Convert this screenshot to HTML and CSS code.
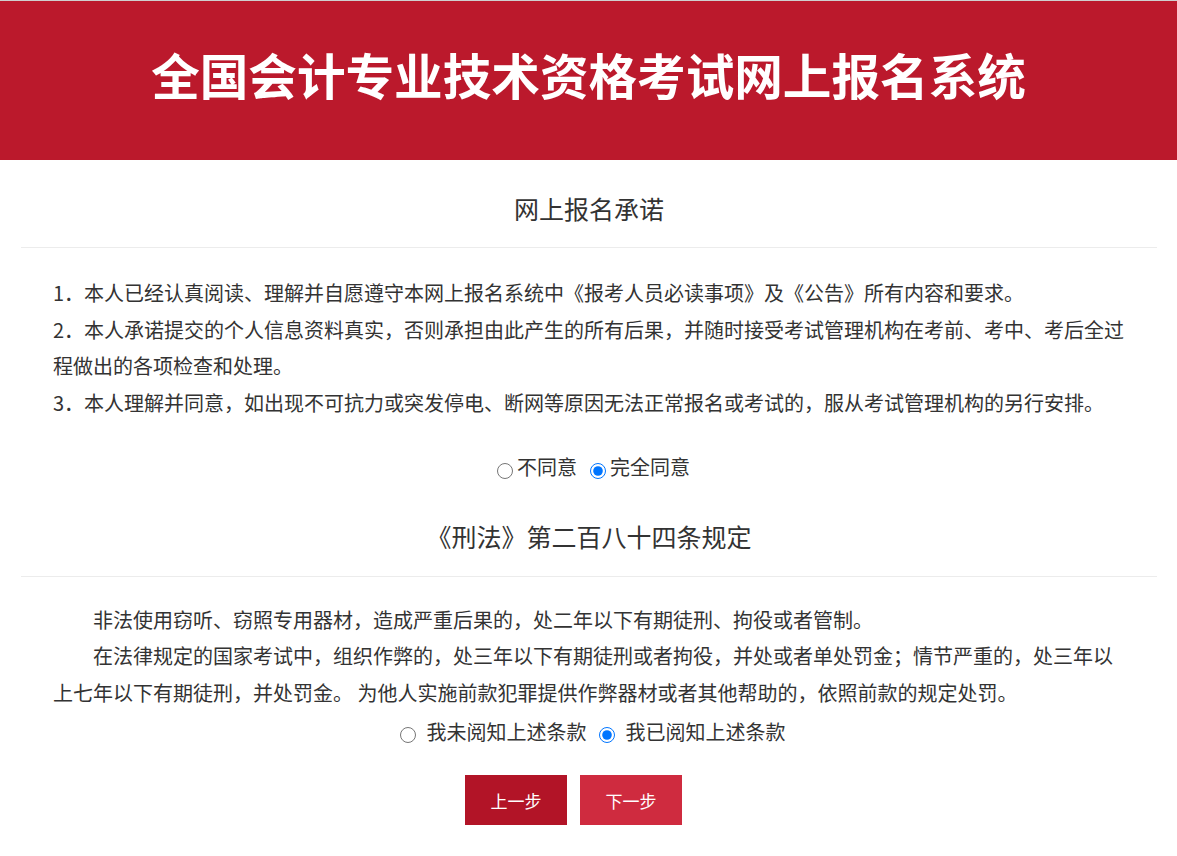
FILE: index.html
```html
<!DOCTYPE html>
<html lang="zh-CN">
<head>
<meta charset="utf-8">
<title>全国会计专业技术资格考试网上报名系统</title>
<link rel="stylesheet" href="styles.css">
</head>
<body>
<header class="banner">
  <h1 class="banner-title">全国会计专业技术资格考试网上报名系统</h1>
</header>
<main class="page">
  <h2 class="section-title">网上报名承诺</h2>
  <div class="terms">
    <p>1．本人已经认真阅读、理解并自愿遵守本网上报名系统中《报考人员必读事项》及《公告》所有内容和要求。</p>
    <p>2．本人承诺提交的个人信息资料真实，否则承担由此产生的所有后果，并随时接受考试管理机构在考前、考中、考后全过程做出的各项检查和处理。</p>
    <p>3．本人理解并同意，如出现不可抗力或突发停电、断网等原因无法正常报名或考试的，服从考试管理机构的另行安排。</p>
  </div>
  <div class="choice choice-agree">
    <label class="opt"><input type="radio" name="agree" class="radio">不同意</label>
    <label class="opt"><input type="radio" name="agree" class="radio" checked>完全同意</label>
  </div>
  <h2 class="section-title section-title-2">《刑法》第二百八十四条规定</h2>
  <div class="law">
    <p class="indent">非法使用窃听、窃照专用器材，造成严重后果的，处二年以下有期徒刑、拘役或者管制。</p>
    <p class="indent">在法律规定的国家考试中，组织作弊的，处三年以下有期徒刑或者拘役，并处或者单处罚金；情节严重的，处三年以上七年以下有期徒刑，并处罚金。 为他人实施前款犯罪提供作弊器材或者其他帮助的，依照前款的规定处罚。</p>
  </div>
  <div class="choice choice-read">
    <label class="opt"><input type="radio" name="read" class="radio">我未阅知上述条款</label>
    <label class="opt"><input type="radio" name="read" class="radio" checked>我已阅知上述条款</label>
  </div>
  <div class="actions">
    <button type="button" class="btn btn-prev">上一步</button>
    <button type="button" class="btn btn-next">下一步</button>
  </div>
</main>
</body>
</html>
```
FILE: styles.css
```css
html, body {
  margin: 0;
  padding: 0;
  background: #fff;
}
body {
  font-family: "Noto Sans CJK SC", "Microsoft YaHei", "Noto Sans", sans-serif;
  color: #333;
  width: 1177px;
}
.banner {
  border-top: 1px solid #cfcfcf;
  background: #bb192c;
  height: 159px;
  display: flex;
  align-items: center;
  justify-content: center;
}
.banner-title {
  margin: 0;
  color: #fff;
  font-size: 48.6px;
  font-weight: 700;
  line-height: 1;
  padding-bottom: 12px;
}
.page {
  padding: 0;
}
.section-title {
  margin: 29px 20px 0 21px;
  padding-bottom: 20px;
  border-bottom: 1px solid #ececec;
  text-align: center;
  font-size: 25px;
  font-weight: 400;
  line-height: 38px;
  color: #333;
}
.section-title-2 {
  margin-top: 31px;
  padding-bottom: 21px;
}
.terms, .law {
  padding: 0 49px 0 53px;
  font-size: 20px;
  line-height: 36.7px;
}
.terms {
  margin-top: 27px;
}
.law {
  margin-top: 25px;
}
.terms p, .law p {
  margin: 0;
}
.indent {
  text-indent: 2em;
}
.choice {
  display: flex;
  justify-content: center;
  align-items: center;
  font-size: 20px;
  line-height: 36.7px;
}
.choice-agree {
  margin-top: 27px;
  padding-left: 10px;
  gap: 13px;
}
.choice-agree .opt {
  gap: 4px;
}
.choice-read {
  margin-top: 2px;
  padding-left: 8px;
  gap: 12px;
}
.choice-read .opt {
  gap: 11px;
}
.opt {
  display: flex;
  align-items: center;
  cursor: pointer;
}
.radio {
  width: 16px;
  height: 16px;
  margin: 0;
  position: relative;
  top: 4px;
}
.choice-read .radio {
  top: 3px;
}
.actions {
  display: flex;
  justify-content: center;
  gap: 13px;
  margin-top: 25px;
  padding-right: 30px;
}
.btn {
  width: 102px;
  height: 50px;
  border: 0;
  border-radius: 0;
  color: #fff;
  font-family: inherit;
  font-size: 17px;
  cursor: pointer;
}
.btn-prev {
  background: #b21427;
}
.btn-next {
  background: #cf2b3f;
}
```
